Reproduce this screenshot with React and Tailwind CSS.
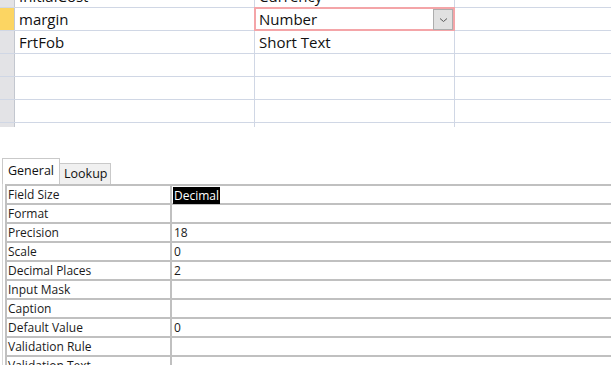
import React from 'react'

const font = { fontFamily: '"Open Sans", "Noto Sans", sans-serif' }

const fieldRows = [
  { name: 'InitialCost', type: 'Currency' },
  { name: 'margin', type: 'Number', selected: true },
  { name: 'FrtFob', type: 'Short Text' },
  { name: '', type: '' },
  { name: '', type: '' },
  { name: '', type: '' },
  { name: '', type: '' },
]

const props = [
  ['Field Size', 'Decimal'],
  ['Format', ''],
  ['Precision', '18'],
  ['Scale', '0'],
  ['Decimal Places', '2'],
  ['Input Mask', ''],
  ['Caption', ''],
  ['Default Value', '0'],
  ['Validation Rule', ''],
  ['Validation Text', ''],
]

const Chevron = () => (
  <svg width="9" height="6" viewBox="0 0 9 6" fill="none">
    <path d="M1 1.5 L4.5 4.5 L8 1.5" stroke="#5a5a5a" strokeWidth="1" />
  </svg>
)

const FieldGrid = () => (
  <div className="h-[127px] overflow-hidden">
    <div className="-mt-[15px] flex flex-col">
      {fieldRows.map((row, i) => (
        <div key={i} className="flex h-[23px] border-b border-[#d0d7e5]">
          <div
            className={`w-[15px] shrink-0 border-r border-[#c3c7cf] ${
              row.selected ? 'bg-[#fcd562]' : 'bg-[#e3e3e6]'
            }`}
          ></div>
          <div className="flex w-[240px] shrink-0 items-center border-r border-[#d0d7e5] pl-[4px] text-[15px] text-[#111]">
            {row.name}
          </div>
          <div className="relative flex w-[200px] shrink-0 items-center border-r border-[#d0d7e5] pl-[4px] text-[15px] text-[#111]">
            {row.type}
            {row.selected && (
              <>
                <div className="absolute -left-[1px] -top-[1px] -bottom-[1px] -right-[1px] border-2 border-[#f4a5a8]"></div>
                <div className="absolute right-[1px] top-[1px] flex h-[21px] w-[20px] items-center justify-center border border-[#adadad] bg-[#e1e1e1]">
                  <Chevron />
                </div>
              </>
            )}
          </div>
          <div className="flex-1"></div>
        </div>
      ))}
    </div>
  </div>
)

const Tabs = () => (
  <div className="flex items-end pl-[2px]">
    <div className="flex h-[26px] w-[58px] items-center border border-b-0 border-[#c9c9c9] bg-white pl-[5px] text-[12.5px] text-[#111]">
      General
    </div>
    <div className="flex h-[21px] w-[51px] items-center border border-b-0 border-l-0 border-[#c9c9c9] bg-[#f0f0f0] pl-[4px] text-[12.5px] text-[#111]">
      Lookup
    </div>
  </div>
)

const PropertyGrid = () => (
  <div className="ml-[2px] border-l border-[#d9d9d9] pl-[2px]">
    <div className="border-l-2 border-t-2 border-[#c0c0c0]">
      {props.map(([label, value], i) => (
        <div key={i} className="flex h-[19px] border-b-2 border-[#c0c0c0]">
          <div className="flex w-[165px] shrink-0 items-center border-r-2 border-[#c0c0c0] pl-[1px] pt-[1px] text-[12px] text-[#1a1a1a]">
            {label}
          </div>
          <div className="flex flex-1 items-center pl-[1px] pt-[1px] text-[12px] text-[#1a1a1a]">
            {i === 0 ? (
              <span className="bg-black px-[1px] leading-[17px] text-white">{value}</span>
            ) : (
              <span className="pl-[1px]">{value}</span>
            )}
          </div>
        </div>
      ))}
    </div>
  </div>
)

export default function App() {
  return (
    <div className="h-[365px] w-[611px] overflow-hidden bg-white" style={font}>
      <FieldGrid />
      <div className="mt-[31px]">
        <Tabs />
        <PropertyGrid />
      </div>
    </div>
  )
}
